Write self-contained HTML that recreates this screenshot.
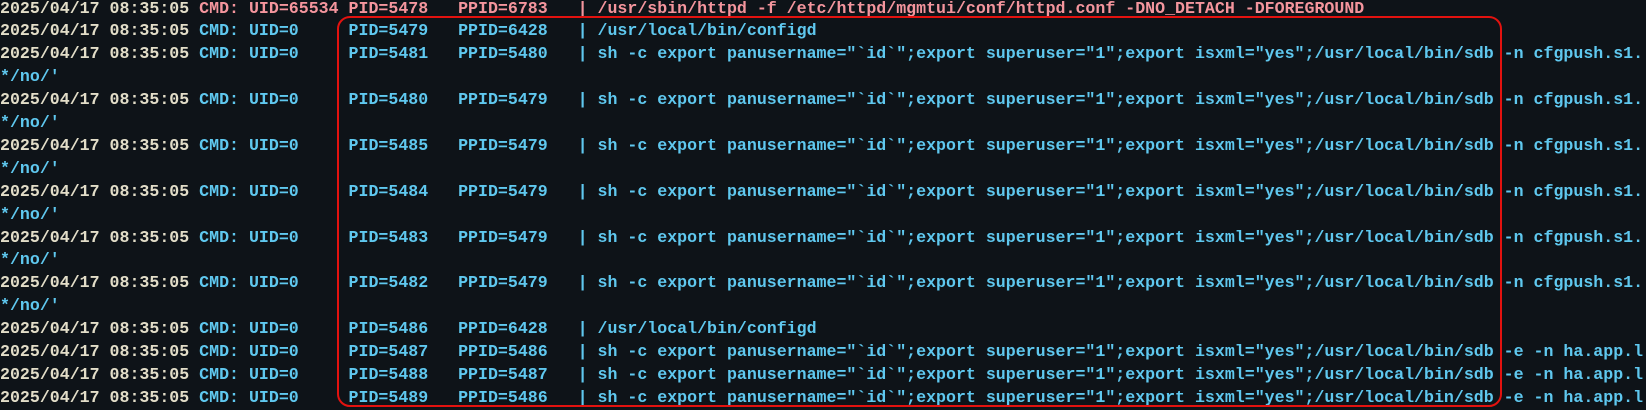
<!DOCTYPE html>
<html><head><meta charset="utf-8"><style>
html,body{margin:0;padding:0;}
body{width:1646px;height:409px;background:#0e1318;overflow:hidden;position:relative;}
.t{position:absolute;left:0;top:-2.5px;font-family:"Liberation Mono",monospace;font-size:16.6px;font-weight:bold;line-height:22.9px;white-space:pre;color:#5fc8ef;}
.d{color:#e2ddc8}.r{color:#f4959d}
.box{position:absolute;left:337px;top:16px;width:1161px;height:387px;border:2px solid #e3120f;border-radius:13px;}
</style></head><body>
<div class="t"><span class="d">2025/04/17 08:35:05 </span><span class="r">CMD: UID=65534 PID=5478   PPID=6783   | /usr/sbin/httpd -f /etc/httpd/mgmtui/conf/httpd.conf -DNO_DETACH -DFOREGROUND</span>
<span class="d">2025/04/17 08:35:05 </span>CMD: UID=0     PID=5479   PPID=6428   | /usr/local/bin/configd
<span class="d">2025/04/17 08:35:05 </span>CMD: UID=0     PID=5481   PPID=5480   | sh -c export panusername="`id`";export superuser="1";export isxml="yes";/usr/local/bin/sdb -n cfgpush.s1.
*/no/'
<span class="d">2025/04/17 08:35:05 </span>CMD: UID=0     PID=5480   PPID=5479   | sh -c export panusername="`id`";export superuser="1";export isxml="yes";/usr/local/bin/sdb -n cfgpush.s1.
*/no/'
<span class="d">2025/04/17 08:35:05 </span>CMD: UID=0     PID=5485   PPID=5479   | sh -c export panusername="`id`";export superuser="1";export isxml="yes";/usr/local/bin/sdb -n cfgpush.s1.
*/no/'
<span class="d">2025/04/17 08:35:05 </span>CMD: UID=0     PID=5484   PPID=5479   | sh -c export panusername="`id`";export superuser="1";export isxml="yes";/usr/local/bin/sdb -n cfgpush.s1.
*/no/'
<span class="d">2025/04/17 08:35:05 </span>CMD: UID=0     PID=5483   PPID=5479   | sh -c export panusername="`id`";export superuser="1";export isxml="yes";/usr/local/bin/sdb -n cfgpush.s1.
*/no/'
<span class="d">2025/04/17 08:35:05 </span>CMD: UID=0     PID=5482   PPID=5479   | sh -c export panusername="`id`";export superuser="1";export isxml="yes";/usr/local/bin/sdb -n cfgpush.s1.
*/no/'
<span class="d">2025/04/17 08:35:05 </span>CMD: UID=0     PID=5486   PPID=6428   | /usr/local/bin/configd
<span class="d">2025/04/17 08:35:05 </span>CMD: UID=0     PID=5487   PPID=5486   | sh -c export panusername="`id`";export superuser="1";export isxml="yes";/usr/local/bin/sdb -e -n ha.app.l
<span class="d">2025/04/17 08:35:05 </span>CMD: UID=0     PID=5488   PPID=5487   | sh -c export panusername="`id`";export superuser="1";export isxml="yes";/usr/local/bin/sdb -e -n ha.app.l
<span class="d">2025/04/17 08:35:05 </span>CMD: UID=0     PID=5489   PPID=5486   | sh -c export panusername="`id`";export superuser="1";export isxml="yes";/usr/local/bin/sdb -e -n ha.app.l</div>
<div class="box"></div>
</body></html>
